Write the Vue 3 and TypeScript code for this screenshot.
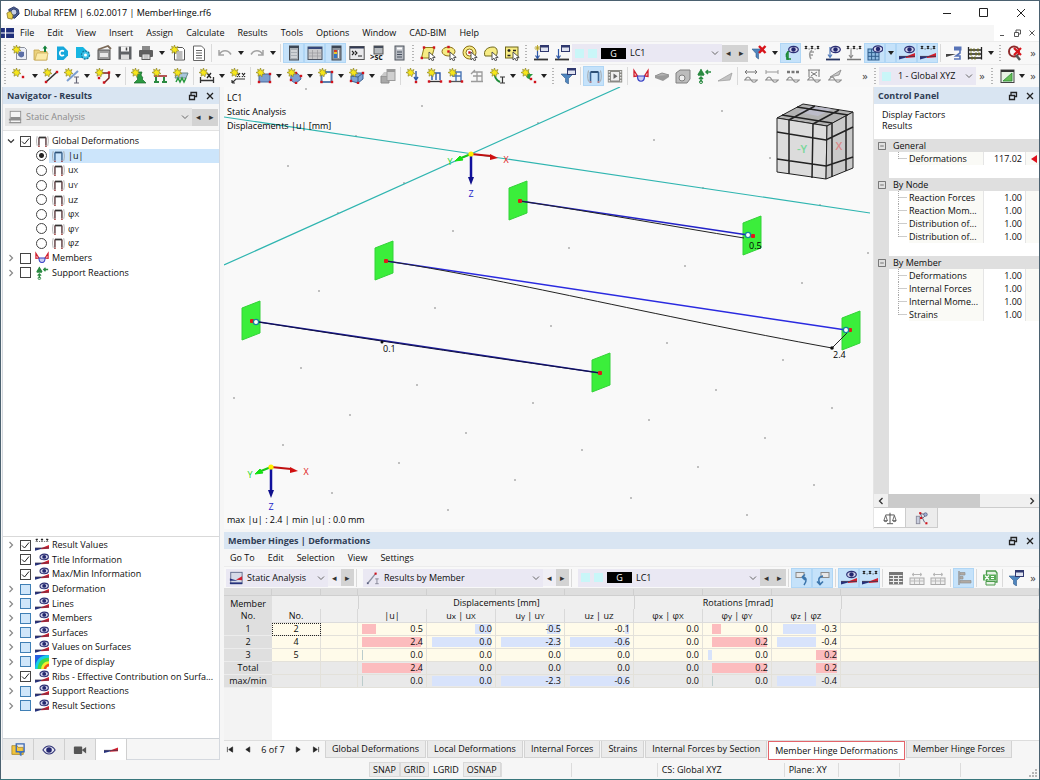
<script setup lang="ts">
import { h, ref } from 'vue'
import type { FunctionalComponent } from 'vue'

const star =
  '<path d="M4.5 0l.9 2.7L8 1.5 6.9 4.1l2 1.5-2.4.5-.6 2.7-1.6-2-2.3 1.4.5-2.6L0 4.5l2.4-.9L1.6 1.3l2.1 1z" fill="#f6e61a" stroke="#8f8726" stroke-width=".7"/>'
const wedge =
  '<path d="M0 14.5v-3.2h8v1z" fill="#26327c"/><path d="M7 11.6L16 8v4.3l-9 .6z" fill="#d2202f"/><path d="M0 11.4h16" stroke="#3c3350" stroke-width=".8"/>'
const eye = (x: number, y: number) =>
  `<ellipse cx="${x}" cy="${y}" rx="4.800" ry="3.200" fill="#d3d4ea" stroke="#2c2f74" stroke-width="1.200"/><circle cx="${x}" cy="${y}" r="2.200" fill="#23276f"/>`
const xxx = '<path d="M1 1l2 3m0-3l-2 3M7 1l2 3m0-3l-2 3M13 1l2 3m0-3l-2 3" stroke="#222" stroke-width="1.200"/><path d="M4.600 4h1M10.600 4h1" stroke="#333"/>'
const cursor = '<path d="M9 7v8l2-1.800 1.200 2.600 1.600-.8-1.200-2.400 2.600-.2z" fill="#fff" stroke="#444" stroke-width=".9"/>'
const red = (pts: number[][]) =>
  pts.map(([x, y]) => `<rect x="${x - 1.2}" y="${y - 1.2}" width="2.400" height="2.400" fill="#d0121b"/>`).join('')
const win = '<rect x="7.500" y=".5" width="8" height="6" fill="#dfe3f0" stroke="#30396f"/><path d="M7 1.500h9" stroke="#30396f" stroke-width="2"/>'
const frame = (c: string, top: string) =>
  `<path d="M4.500 4h8" stroke="${top}" stroke-width="2"/><path d="M4.500 13V4M12.500 13V4" stroke="${c}" stroke-width="1.600"/><path d="M4.500 13.500v1M12.500 13.500v1" stroke="#8d1d1d" stroke-width="2"/><path d="M2.500 2.500c-1 4-1 7 0 11M14.500 2.500c1 4 1 7 0 11" fill="none" stroke="#999" stroke-width=".8"/>`
const wave = '<path d="M1 12h14M2 12c2-4 4-4 6 0 2 3 4 3 6 0" fill="none" stroke="#8d8d8d" stroke-width="1.200"/>'

const icons: Record<string, string> = {
  newModel: '<path d="M4.500 2.500h8l2 2v10h-10z" fill="#eceff6" stroke="#8a8f9b"/><path d="M6 10c0-4 3-4 6-3v4c-2 2-4 2-6-1z" fill="#5b6ea6"/>' + star,
  open: '<path d="M1 5h5l1 1.500h7V15H1z" fill="#ecd27c" stroke="#c2a14a" stroke-width=".8"/><path d="M2 15l2-7h11l-1.500 7z" fill="#fbeaa9" stroke="#c9ab55" stroke-width=".7"/><path d="M11 7V3.500H9.500L12 .5l2.500 3H13V7z" fill="#12813a"/>',
  dlubal: '<path d="M3 1.500h6.500L14 6v4.500L9.500 15H3z" fill="#17a8dc"/><path d="M10 6.300C7.500 4.800 5.800 6.200 5.800 8.200S7.800 11.500 10 10" fill="none" stroke="#fff" stroke-width="1.700"/>',
  cloud: '<path d="M1 2h7l3 3v8H1z" fill="#17b6e2"/><circle cx="10.500" cy="10" r="4" fill="#3fc4ea" stroke="#14789e" stroke-width="1.300" stroke-dasharray="2 1"/><circle cx="10.500" cy="10" r="1.500" fill="#fff"/>',
  manager: '<rect x="2" y="5" width="12" height="9.500" fill="#9c9c9c" stroke="#555"/><rect x="4" y="8" width="8" height="4" fill="#e7e7e7"/><path d="M2 4.500L12 1l3 3" fill="none" stroke="#7b6a58" stroke-width="1.800"/>',
  save: '<path d="M1.500 1.500h13v13h-13z" fill="#5e6164"/><rect x="4" y="1.500" width="8" height="5" fill="#f4f4f4"/><rect x="4" y="9.500" width="8" height="5" fill="#dcdcdc"/><path d="M9.500 2.500v3" stroke="#444" stroke-width="1.500"/>',
  print: '<rect x="4" y="1" width="8" height="5" fill="#8b8b8b"/><rect x="1" y="5" width="14" height="7" rx="1" fill="#606060"/><rect x="4" y="9" width="8" height="5.500" fill="#f1f1f1" stroke="#5a5a5a"/><path d="M5.500 11h5M5.500 13h5" stroke="#888" stroke-width=".8"/>',
  newReport: '<path d="M4.500 2.500h8l2 2v10.500h-10z" fill="#fff" stroke="#555"/><path d="M6.500 7h6M6.500 9h6M6.500 11h6M6.500 13h6" stroke="#666" stroke-width=".9"/>' + star,
  report: '<path d="M2.500 1h8l3 3v11.500h-11z" fill="#fff" stroke="#666"/><path d="M5 5.500h6M5 8h6M5 10.500h6M5 13h6" stroke="#666"/>',
  undo: '<path d="M2 5v5h5M2.500 9.500C5 4.500 11 4.500 14 9.500" fill="none" stroke="#a3a3a3" stroke-width="1.500"/>',
  redo: '<path d="M14 5v5H9M13.500 9.500C11 4.500 5 4.500 2 9.500" fill="none" stroke="#a3a3a3" stroke-width="1.500"/>',
  panelA: '<rect x="3.500" y="1" width="9" height="14" fill="#a9afb5" stroke="#474d55"/><path d="M3 2h10" stroke="#3c4654" stroke-width="2"/><path d="M5 6h6M5 9h6M5 12h6" stroke="#f5f5f5" stroke-width="1.200"/>',
  panelB: '<rect x="1" y="2" width="14" height="12.500" fill="#c9c9cb" stroke="#4d5563"/><path d="M1 3h14" stroke="#35477a" stroke-width="2"/><path d="M5.500 5v9M10.500 5v9M2 8h13M2 11h13" stroke="#9a9a9e" stroke-width=".7"/>',
  panelC: '<rect x="4" y="1" width="9" height="14" fill="#8d949c" stroke="#474d55"/><path d="M4 2h9" stroke="#3c4654" stroke-width="2"/><path d="M6 5h3v8H6z" fill="#3273c4"/><path d="M6 5h3v2H6z" fill="#d13b2a"/><path d="M6 7h3v2H6z" fill="#e6c62b"/><path d="M10.500 5v8" stroke="#eee"/>',
  console: '<rect x=".8" y="1.500" width="14.400" height="13" fill="#e9e9eb" stroke="#555"/><path d="M1 2.500h14" stroke="#333b55" stroke-width="2"/><path d="M3 6l2 2-2 2M6 6l2 2-2 2M9 11h4" fill="none" stroke="#222" stroke-width="1.100"/>',
  script: '<rect x="4" y="1" width="9" height="8" fill="#b5b9bd" stroke="#555"/><path d="M4 2h9" stroke="#444c5a" stroke-width="2"/><text x="0" y="15" font-size="8" font-weight="700" fill="#222">&gt;sc</text>',
  calc: '<rect x="4" y="1" width="9" height="14" fill="#b6bac1" stroke="#51565f"/><path d="M6 3.500h5" stroke="#fff" stroke-width="2"/><path d="M6 7h5M6 9.500h5M6 12h5" stroke="#47505f" stroke-width="1.200"/>',
  selPoly: '<path d="M4 2.500h10.500L11.500 13H1.500z" fill="#f7ec84" stroke="#8d7d18"/>' + red([[4, 2.5], [14, 2.5], [1.8, 13]]) + cursor,
  selEllipse: '<ellipse cx="7.500" cy="6.500" rx="6.500" ry="4.500" fill="#f7ec84" stroke="#8a6f18"/>' + red([[7.5, 2], [7.5, 6.5]]) + cursor,
  selCircle: '<circle cx="7.500" cy="7.500" r="6.500" fill="#f7ec84" stroke="#8a6f18"/><circle cx="7.500" cy="7.500" r="3.500" fill="#fff" stroke="#8a6f18"/>' + red([[7.5, 7.5]]) + cursor,
  selFree: '<path d="M2 11C0 6 4 2 10 2c5 0 5 6 3 9z" fill="#f7ec84" stroke="#6f681c"/>' + cursor,
  selCalc: '<rect x="1.500" y="2" width="12.500" height="11" fill="#f7ec84" stroke="#6d6418"/><path d="M3.500 5.500h3M5 4v3M9 5.500h3M3.500 10.500h3" stroke="#222" stroke-width="1.300"/>' + cursor,
  loadNew: '<path d="M1 14.500h14" stroke="#333" stroke-width="1.800"/><path d="M4.500 5v8M2.500 10.500l2 3 2-3" fill="none" stroke="#2e58a6" stroke-width="1.200"/>' + win + '<path d="M4.500 0v6M1.500 3h6M2.500 1l4 4M6.500 1l-4 4" stroke="#b39f1c" stroke-width=".9"/>',
  load: '<path d="M1 14.500h14" stroke="#333" stroke-width="1.800"/><path d="M4.500 4v9M2.500 10.500l2 3 2-3" fill="none" stroke="#2e58a6" stroke-width="1.200"/>' + win,
  filterX: '<path d="M1 4h10L7.500 8.500V14L5 12V8.500z" fill="#4f86bf" stroke="#325d8c" stroke-width=".6"/><path d="M8 1l6.500 7M14.500 1L8 8" stroke="#d8141b" stroke-width="2.400"/>',
  supEye: '<path d="M7 6c-4 1-5 5-2 8M5 6v9M3 14h5" fill="none" stroke="#1d8a37" stroke-width="1.500"/>' + eye(10.5, 4.5),
  supX: '<path d="M8 5c-3 2-3 6-1 9M6 7h4M6 10h3" fill="none" stroke="#9c9c9c" stroke-width="1.500"/>' + xxx,
  lineEye: '<path d="M1 14.500h14" stroke="#26345f" stroke-width="1.800"/><path d="M5 2v10M3 9.500l2 3 2-3" fill="none" stroke="#4f7aba" stroke-width="1.200"/>' + eye(10.5, 4.5),
  lineX: '<path d="M1 14.500h14" stroke="#777" stroke-width="1.500"/><path d="M5 5v8M3 10l2 3 2-3" fill="none" stroke="#8b8b8b" stroke-width="1.200"/>' + xxx,
  meshEye: '<rect x="1" y="4" width="11" height="11" fill="#8fbbe2" stroke="#2f5d8b"/><path d="M4.600 4v11M8.300 4v11M1 7.600h11M1 11.300h11" stroke="#2f5d8b"/>' + eye(11, 4),
  resEye: wedge + eye(10.5, 4.5),
  resX: wedge + xxx,
  resWin: '<path d="M0 9h10l-10 3z" fill="#444"/><path d="M8 4h6v4l-4 3h4v3H8" fill="none" stroke="#5773b7" stroke-width="1.600"/><rect x="8" y="1.500" width="7.500" height="4" fill="#5773b7"/>',
  abacus: '<path d="M1.500 2v12.500M14.500 2v12.500M1 5h14M1 9h14M1 13h14" stroke="#222" stroke-width="1.300"/><path d="M4 3.500v3M7 3.500v3M11 3.500v3M4 7.500v3M9 7.500v3M12 7.500v3M5 11.500v3M8 11.500v3" stroke="#6a6a22" stroke-width="1.500"/>',
  zoomX: '<circle cx="7" cy="6.500" r="5" fill="none" stroke="#8e2b2b" stroke-width="2"/><path d="M9 10l4 5" stroke="#555" stroke-width="2.500"/><path d="M7 3l7 7M14 3l-7 7" stroke="#d8141b" stroke-width="2.200"/>',
  node: star + red([[11, 9]]),
  line: '<path d="M3 14L14 4" stroke="#333" stroke-width="1.600"/>' + red([[3, 14], [14, 4]]) + star,
  member: '<path d="M3 13L14 3" stroke="#7c9fd0" stroke-width="2"/><path d="M10 9h5M12.500 9v6M10 15h5" stroke="#667" stroke-width="1.200"/>' + star,
  polyline: '<path d="M5 5h9v5L9 15" fill="none" stroke="#7b2020" stroke-width="1.500"/>' + red([[14, 4.5], [9, 14.5], [4, 10]]) + star,
  supNode: '<path d="M7 4h4l-1 3 2 3-1 1 4 4H3l4-4-1-1z" fill="#2a9a41" stroke="#17682a" stroke-width=".7"/>' + star,
  supLine: '<path d="M2 8h13" stroke="#a02020" stroke-width="1.500"/><path d="M4 9v5M2 14h5M12 9v5M10 14h5" stroke="#2a8a41" stroke-width="2"/>' + star,
  supSurf: '<path d="M4 5h11l-2 5H2z" fill="#a9c6dc" stroke="#688"/><path d="M3 14l2-4 2 4 2-4 2 4 2-4" fill="none" stroke="#2a9a41" stroke-width="1.500"/>' + star,
  dimX: '<path d="M1.500 9v6M14.500 9v6M1.500 12.500h13" stroke="#333" stroke-width="1.300"/><path d="M8 5l4 5M12 5l-4 5" stroke="#222" stroke-width="1.300"/>' + star,
  dimXX: '<path d="M2 15l4-4h9M2 15v-3M2 15h3" fill="none" stroke="#333" stroke-width="1.200"/><path d="M7 5l3 4M10 5L7 9M12 5l3 4M15 5l-3 4" stroke="#222" stroke-width="1.200"/>' + star,
  surface: '<rect x="3" y="6" width="11" height="8" fill="#7d9fd0" stroke="#48689c"/>' + red([[3, 14], [14, 14], [14, 6]]) + star,
  surfRound: '<path d="M4 8c4-6 9-2 10 3l-5 4c-4-1-6-3-5-7z" fill="#7d9fd0" stroke="#48689c"/>' + red([[4, 12], [9, 15], [14, 8], [9, 5]]) + star,
  opening: '<rect x="3.500" y="4" width="10" height="10" fill="#fff" stroke="#5b7fae" stroke-width="2"/>' + red([[3.5, 14], [14, 14], [14, 4], [3.5, 4]]) + star,
  solid: '<path d="M2 8l5-3h7v6l-5 4-7-2z" fill="#7ea4d4" stroke="#3d6192"/><path d="M2 8l7 1 5-4M9 9v6" fill="none" stroke="#3d6192"/>' + red([[2, 13], [9, 15], [14, 5]]) + star,
  block: '<path d="M1 8h8v7H1z" fill="#a9a9a9" stroke="#8a8a8a"/><path d="M1 8l3-4h4v4z" fill="#c9c9c9"/><rect x="7" y="1.500" width="8" height="11" fill="#cfcfcf" stroke="#9b9b9b"/><path d="M7 3h8" stroke="#999" stroke-width="2"/>',
  nLoad: '<path d="M10 3v9M8 9l2 3 2-3" fill="none" stroke="#2e58a6" stroke-width="1.400"/>' + red([[10, 14]]) + star,
  mLoad: '<path d="M2 13.500h12" stroke="#333" stroke-width="1.300"/><path d="M4 5h9v7M9 5v7M5 7v5" fill="none" stroke="#2e58a6" stroke-width="1.400"/>' + red([[2, 13.5], [14, 13.5]]) + star,
  sLoad: '<path d="M2 13.500h12" stroke="#555" stroke-width="1.300"/><path d="M4 4h9v9M8 4v9M4 8h9" fill="none" stroke="#4c77b6" stroke-width="1.400"/>' + red([[2, 13.5], [14, 13.5]]) + star,
  gLoad: '<path d="M2 13.500h12M4 4h9v9M8 4v9M4 8h9M2 6l4-4" fill="none" stroke="#9b9b9b" stroke-width="1.300"/>',
  imp: '<path d="M5 4c-1 5 1 8 5 10" fill="none" stroke="#1d8a37" stroke-width="2"/><path d="M10 9h5M12.500 9v6M10 15h5" stroke="#333" stroke-width="1.200"/>' + star,
  hinge: '<path d="M4 6l4-3v3h4l-3 3 1 3-4-2z" fill="#2a9a41"/>' + red([[10, 11], [14, 14]]) + star,
  filter: '<path d="M1 6h12L8.500 10.500V16l-3-2v-3.500z" fill="#4f86bf" stroke="#325d8c" stroke-width=".6"/>' + win,
  frameBtn: frame('#5a3a3e', '#333'),
  frameBlue: frame('#3b6694', '#2e5074'),
  film: '<rect x=".8" y="2" width="14.400" height="12.500" fill="#8b8b86"/><rect x="4" y="4" width="8" height="8.500" fill="#efefef"/><path d="M6.500 5.500v5.500l4-2.700z" fill="#666"/><path d="M2.300 3v11M13.700 3v11" stroke="#eee" stroke-width="1.200" stroke-dasharray="1.500 1.500"/>',
  moment: '<path d="M1 2.500v6L4.500 8zM15 2.500v6L11.500 8z" fill="#f6c8cb" stroke="#d2202f" stroke-width="1.300"/><path d="M4.500 8h7c0 7-7 7-7 0z" fill="#c9cdf2" stroke="#3741c4" stroke-width="1.200"/>',
  slab: '<path d="M1 8l7-3 7 2-6 4z" fill="#b5b5b5" stroke="#8f8f8f"/><path d="M1 8v2l8 3 6-4V7" fill="#9a9a9a"/>',
  gSolid: '<path d="M1 5l4-3h10v9l-3 4H1z" fill="#bcbcbc" stroke="#808080"/><circle cx="7" cy="10" r="3" fill="#eee" stroke="#808080"/>',
  react: '<path d="M5 7V1M2 7h6M2.500 6l2.500-4 2.500 4z" fill="#2a8a41" stroke="#2a8a41" stroke-width="1.400"/><path d="M5 9v5M3 11l2-2 2 2M10 4h5M12 2l-2 2 2 2" fill="none" stroke="#2a8a41" stroke-width="1.500"/><circle cx="5" cy="14" r="1.500" fill="none" stroke="#2a8a41"/>',
  gWedge: '<path d="M1 13L15 5l-2 7z" fill="#c4c4c4" stroke="#9a9a9a" stroke-width=".7"/>',
  gr1: wave + '<path d="M2 4h12M4 2L2 4l2 2M12 2l2 2-2 2" fill="none" stroke="#777"/>',
  gr2: wave + '<path d="M2 4h12M2 2v4M14 2v4" fill="none" stroke="#999"/>',
  gr3: wave + '<path d="M2 4h12" stroke="#777" stroke-width="2.500" stroke-dasharray="3 1.500"/>',
  gr4: wave + '<path d="M2 2h12M3 2v7M13 2v7M5 4l6 4M11 4L5 8" fill="none" stroke="#777"/>',
  gr5: wave + '<path d="M3 9L14 2l-2 5z" fill="#c9c9c9" stroke="#888" stroke-width=".8"/>',
  cplane: '<rect x="2" y="2" width="13" height="12.500" fill="#e7f2e5" stroke="#444"/><path d="M2 3h13" stroke="#333" stroke-width="2"/><path d="M4 13l9-8v8z" fill="#67bf55" stroke="#2a8a35" stroke-width=".8"/>',
  jumpA: '<rect x="2" y="2.500" width="8" height="5" fill="#e7e7e7" stroke="#8a8a8a"/><path d="M8 7c5 0 5 4 2 8M8 7l3-2.500M8 7l3 3" fill="none" stroke="#3c76ad" stroke-width="1.600"/>',
  jumpB: '<rect x="6" y="2.500" width="8" height="5" fill="#e7e7e7" stroke="#8a8a8a"/><path d="M8 6c-5 1-5 4-3 8M2 11.500L5 14.500l3-3" fill="none" stroke="#3c76ad" stroke-width="1.600"/>',
  gridT: '<rect x="1" y="2" width="14" height="12.500" fill="#777"/><path d="M1.500 5.500h13M1.500 8.500h13M1.500 11.500h13M5.500 5v9M10.500 5v9" stroke="#ededed" stroke-width="1.100"/>',
  gridG: '<rect x="1" y="8" width="14" height="6.500" fill="#eee" stroke="#a9a9a9"/><path d="M5.500 8v6M10.500 8v6M1 11h14" stroke="#bbb"/><path d="M3 4.500h9M5 3L3 4.500 5 6M11 3l2 1.500L11 6" fill="none" stroke="#b5b5b5"/>',
  bars: '<path d="M3 1v14" stroke="#999" stroke-width="1.500"/><path d="M4 2.500h5v2.500H4zM4 6.500h3v2.500H4zM4 10.500h11v2.500H4z" fill="#b0a9a2" stroke="#929292" stroke-width=".7"/>',
  excel: '<path d="M4.500 1h9l1.500 2v9h-10.500z" fill="#e7f3e6" stroke="#4c9a4c" stroke-width="1.300"/><path d="M4 11.500h9v3.500H4z" fill="#e7f3e6" stroke="#4c9a4c"/><rect x="1" y="4.500" width="13" height="6" fill="#58ab58"/><path d="M3 5.500l4 4M7 5.500l-4 4M9 6.500h3M9 8.500h3" stroke="#fff" stroke-width="1.200"/>',
  analysis: '<rect x="2" y="1.500" width="13" height="13" fill="#d6dbe8" stroke="#5a6687"/><path d="M1 8.500l9 2.500H1z" fill="#26327c"/><path d="M8 10l7-4v4.500z" fill="#d2202f"/><path d="M1 14h14" stroke="#26327c" stroke-width="2"/>',
  analysisG: '<rect x="2.500" y="1.500" width="12" height="13" fill="#f4f4f4" stroke="#8e8e8e"/><path d="M1 11h14M3 9h11" stroke="#8e8e8e" stroke-width="1.800"/><path d="M1 14.500h14" stroke="#8e8e8e"/>',
  byMember: '<path d="M2 14L11 3" stroke="#8a8fa0" stroke-width="1.500"/><rect x="1" y="13" width="2" height="2" fill="#5a5f80"/>' + red([[11, 3]]) + '<path d="M10.500 9h4M12.500 9v5.500M10.500 14.500h4" stroke="#889" stroke-width="1.100"/>',
  rainbow: '<path d="M0 0h16v16H0z" fill="#2560e0"/><path d="M0 16C0 6 6 0 16 0v16z" fill="#15cfe6"/><path d="M3 16C3 8 8 3 16 3v13z" fill="#42d845"/><path d="M7 16c0-5 4-9 9-9v9z" fill="#f3ee2d"/><path d="M10 16c0-3 3-6 6-6v6z" fill="#f1501c"/><path d="M13 16c0-2 1-3 3-3v3z" fill="#fff"/>',
  data: '<path d="M1 3h6l1 2h6v8H1z" fill="#f5c63a" stroke="#9c7a1c" stroke-width=".8"/><path d="M6 1h9v9H6z" fill="none" stroke="#3a68b4" stroke-width="1.500"/><path d="M8 9h6l-2 3v3l-2-1v-2z" fill="#3f74bd"/>',
  eyeTab: '<path d="M1 8c4-6 10-6 14 0-4 6-10 6-14 0z" fill="#e8e8f4" stroke="#2c2f74" stroke-width="1.200"/><circle cx="8" cy="8" r="3.200" fill="#23276f"/>',
  camera: '<rect x="1" y="4" width="9.500" height="8.500" rx="1" fill="#555"/><path d="M10 8l5-3.500v7.500z" fill="#555"/>',
  wedgeTab: '<g transform="translate(0 -3)">' + wedge + '</g>',
  scales: '<path d="M8 2v12M4.500 14.500h7M3 4.500h10" stroke="#444" fill="none"/><path d="M3 5l-2 6h4zM13 5l-2 6h4z" fill="none" stroke="#444" stroke-width=".9"/><path d="M1 11c1 1.500 3 1.500 4 0M11 11c1 1.500 3 1.500 4 0" stroke="#444" fill="none"/>',
  factors: '<rect x="1.500" y="6" width="4" height="8.500" fill="#c9cede" stroke="#889"/><path d="M6 3l7 1M6 3l5 10M13 4L9 8" stroke="#446" stroke-width=".9"/>' + red([[6, 2.5], [13, 14], [7, 8]]) + '<circle cx="12" cy="4" r="2" fill="#9fb2d8" stroke="#446" stroke-width=".7"/>',
}

/* Strip entries: an icon name, a trailing "*" for a pressed button,
   "v" drop arrow, "V" pressed drop arrow, "|" divider, ":" grip, "»" overflow. */
const ToolStrip: FunctionalComponent<{ items: string }> = (props) =>
  h('div', { class: 'strip' }, props.items.split(' ').map((it) => {
    if (it === '|') return h('i', { class: 'sep' })
    if (it === ':') return h('i', { class: 'grip' })
    if (it === 'v' || it === 'V')
      return h('button', { class: ['drop', { on: it === 'V' }], 'aria-label': 'More options' }, h('i'))
    if (it === '»') return h('button', { class: 'over', 'aria-label': 'More tools' }, '»')
    const name = it.replace('*', '')
    return h('button', { class: ['tool', { on: it.endsWith('*') }], 'aria-label': name },
      h('svg', { viewBox: '0 0 16 16', innerHTML: icons[name] }))
  }))
ToolStrip.props = ['items']

const row1a = ': newModel open dlubal cloud manager save print v newReport report | undo v redo v | panelA* panelB* panelC* console script calc : selPoly selEllipse selCircle selFree selCalc : loadNew load'
const row1b = 'filterX v supEye* supX lineEye lineX meshEye* V resEye* resX* | resWin abacus v : zoomX'
const row2a = ': node v line member v polyline v | supNode supLine supSurf | dimX v dimXX | surface v surfRound v opening v solid v block | nLoad mLoad sLoad gLoad imp v hinge v : filter | frameBlue* film | moment slab gSolid react gWedge | gr1 gr2 gr3 gr4 gr5'
const menus = ['File', 'Edit', 'View', 'Insert', 'Assign', 'Calculate', 'Results', 'Tools', 'Options', 'Window', 'CAD-BIM', 'Help']
const tableMenus = ['Go To', 'Edit', 'Selection', 'View', 'Settings']

const component = ref('|u|')
const components = [
  { id: '|u|', a: '|u|', b: '' },
  { id: 'ux', a: 'u', b: 'X' },
  { id: 'uy', a: 'u', b: 'Y' },
  { id: 'uz', a: 'u', b: 'Z' },
  { id: 'px', a: 'φ', b: 'X' },
  { id: 'py', a: 'φ', b: 'Y' },
  { id: 'pz', a: 'φ', b: 'Z' },
]
const options = [
  { t: 'Result Values', icon: 'resX', on: true, exp: true },
  { t: 'Title Information', icon: 'resEye', on: true, exp: false },
  { t: 'Max/Min Information', icon: 'resEye', on: true, exp: false },
  { t: 'Deformation', icon: 'resEye', on: false, exp: true },
  { t: 'Lines', icon: 'resEye', on: false, exp: true },
  { t: 'Members', icon: 'resEye', on: false, exp: true },
  { t: 'Surfaces', icon: 'resEye', on: false, exp: true },
  { t: 'Values on Surfaces', icon: 'resEye', on: false, exp: true },
  { t: 'Type of display', icon: 'rainbow', on: false, exp: true },
  { t: 'Ribs - Effective Contribution on Surfa...', icon: 'resEye', on: true, exp: true },
  { t: 'Support Reactions', icon: 'resEye', on: false, exp: true },
  { t: 'Result Sections', icon: 'resEye', on: false, exp: true },
]
const navTabs = ['data', 'eyeTab', 'camera', 'wedgeTab']

const factors = [
  { t: 'General', rows: [['Deformations', '117.02']] },
  { t: 'By Node', rows: [['Reaction Forces', '1.00'], ['Reaction Mom...', '1.00'], ['Distribution of...', '1.00'], ['Distribution of...', '1.00']] },
  { t: 'By Member', rows: [['Deformations', '1.00'], ['Internal Forces', '1.00'], ['Internal Mome...', '1.00'], ['Strains', '1.00']] },
]

/* Cell: text, bar kind, bar start and bar width in percent of the cell. */
type Cell = [string, string?, number?, number?]
const z: Cell = ['0.0']
const results: { no: string; obj: string; sum: boolean; cells: Cell[] }[] = [
  { no: '1', obj: '2', sum: false, cells: [['0.5', 'r', 6, 20], ['0.0', 'b', 71, 23], ['-0.5', 'b', 75, 19], ['-0.1', 'b', 88, 6], z, ['0.0', 'r', 13, 13], ['-0.3', 'b', 16, 48]] },
  { no: '2', obj: '4', sum: false, cells: [['2.4', 'r', 6, 86], ['0.0', 'b', 7, 87], ['-2.3', 'b', 7, 87], ['-0.6', 'b', 7, 87], z, ['0.2', 'r', 13, 81], ['-0.4', 'b', 7, 57]] },
  { no: '3', obj: '5', sum: false, cells: [['0.0', 'n', 6, 1], z, z, z, z, ['0.0', 'b', 7, 6], ['0.2', 'r', 64, 31]] },
  { no: 'Total', obj: '', sum: true, cells: [['2.4', 'r', 6, 86], z, z, z, z, ['0.2', 'r', 13, 81], ['0.2', 'r', 64, 31]] },
  { no: 'max/min', obj: '', sum: true, cells: [['0.0', 'n', 6, 1], ['0.0', 'b', 7, 87], ['-2.3', 'b', 7, 87], ['-0.6', 'b', 7, 87], z, ['0.0', 'n', 13, 1], ['-0.4', 'b', 7, 57]] },
]
const heads = [['u', 'x', 'X'], ['u', 'y', 'Y'], ['u', 'z', 'Z'], ['φ', 'x', 'X'], ['φ', 'y', 'Y'], ['φ', 'z', 'Z']]
const sheets = ['Global Deformations', 'Local Deformations', 'Internal Forces', 'Strains', 'Internal Forces by Section', 'Member Hinge Deformations', 'Member Hinge Forces']

const supports = [[509, 181], [375, 241], [242, 301], [743, 216], [842, 311], [592, 353]]
const nodes = [[520, 201], [386, 261], [252, 321], [753, 236], [850, 330], [600, 373]]
const hinges = [[256, 322], [748, 235], [846, 330]]
const dots = [
  [306, 89], [422, 106], [722, 111], [356, 136], [538, 123], [654, 140], [770, 158], [288, 166], [404, 183], [338, 213],
  [453, 231], [569, 248], [685, 266], [802, 283], [868, 253], [703, 188], [820, 205], [319, 291], [435, 308], [551, 326],
  [667, 343], [783, 360], [301, 368], [417, 385], [533, 403], [649, 420], [765, 438], [283, 445], [399, 463], [515, 480],
  [631, 498], [747, 515], [234, 398], [350, 415], [466, 433], [582, 450], [698, 467], [814, 485], [716, 390], [832, 408],
  [332, 493], [448, 510],
]
const triads = [{ x: 471, y: 154, lx: 506, ly: 163, yx: 450, yy: 165 }, { x: 271, y: 467, lx: 306, ly: 475, yx: 250, yy: 478 }]
</script>

<template>
  <div class="app">
    <header class="titlebar">
      <svg class="logo" viewBox="0 0 16 16">
        <path d="M3 4l6-3 5 3 1 5-5 5-4-1z" fill="#4a5f94" stroke="#26345f" />
        <circle cx="9" cy="7" r="3.500" fill="#c6d0e6" stroke="#26345f" />
        <path d="M1 8l4-2 3 5-1 4-5-1z" fill="#e9d24a" stroke="#7b6a1c" stroke-width=".8" />
      </svg>
      <h1>Dlubal RFEM | 6.02.0017 | MemberHinge.rf6</h1>
      <button aria-label="Minimize"><svg viewBox="0 0 12 12"><path d="M2 6.500h8" /></svg></button>
      <button aria-label="Maximize"><svg viewBox="0 0 12 12"><path d="M1.500 1.500h8v8h-8z" /></svg></button>
      <button aria-label="Close"><svg viewBox="0 0 12 12"><path d="M2 2l8 8M10 2l-8 8" /></svg></button>
    </header>

    <nav class="menubar">
      <svg class="flag" viewBox="0 0 13 10"><path d="M0 0h13v10H0z" fill="#1f2f7a" /><path d="M0 5h13M4.500 0v10" stroke="#fff" stroke-width="1.200" /></svg>
      <button v-for="m in menus" :key="m">{{ m }}</button>
      <span class="mdi">
        <button aria-label="Minimize document"><svg viewBox="0 0 10 10"><path d="M3 7.500h4" /></svg></button>
        <button aria-label="Restore document"><svg viewBox="0 0 10 10"><path d="M2.500 4.500h4v4h-4zM4 4V2h4.500v4H7" /></svg></button>
        <button aria-label="Close document"><svg viewBox="0 0 10 10"><path d="M2.500 2.500l5 5M7.500 2.500l-5 5" /></svg></button>
      </span>
    </nav>

    <div class="bar">
      <ToolStrip :items="row1a" />
      <div class="combo wide">
        <i class="sw" /><i class="sw" /><b class="g">G</b>
        <select aria-label="Load case"><option>LC1</option></select>
      </div>
      <button class="step" aria-label="Previous load case">◂</button>
      <button class="step" aria-label="Next load case">▸</button>
      <ToolStrip :items="row1b" />
      <ToolStrip class="push" items="»" />
    </div>
    <div class="bar tight">
      <ToolStrip :items="row2a" />
      <ToolStrip class="push" items="» :" />
      <div class="combo csys">
        <i class="sw" />
        <select aria-label="Coordinate system"><option>1 - Global XYZ</option></select>
      </div>
      <ToolStrip items="» : cplane v »" />
    </div>

    <div class="body">
      <aside class="navigator">
        <div class="head">
          <h2>Navigator - Results</h2>
          <button aria-label="Float panel"><svg viewBox="0 0 10 10"><path d="M1.500 4.500h5v4h-5zM3 4V1.500h5.500v4H7" /></svg></button>
          <button aria-label="Close panel"><svg viewBox="0 0 10 10"><path d="M2 2l6 6M8 2l-6 6" /></svg></button>
        </div>
        <div class="line">
          <div class="combo off">
            <svg class="ic" viewBox="0 0 16 16" v-html="icons.analysisG" />
            <select aria-label="Analysis type" disabled><option>Static Analysis</option></select>
          </div>
          <button class="step" aria-label="Previous">◂</button>
          <button class="step" aria-label="Next">▸</button>
        </div>
        <div class="tree top">
          <label class="node">
            <svg class="tw open" viewBox="0 0 8 8"><path d="M1 2.500l3 3 3-3" /></svg>
            <input type="checkbox" checked><svg class="ic" viewBox="0 0 16 16" v-html="icons.frameBtn" />Global Deformations
          </label>
          <label v-for="c in components" :key="c.id" class="node sub">
            <input v-model="component" type="radio" name="component" :value="c.id">
            <span class="pick" :class="{ sel: component === c.id }">
              <svg class="ic" viewBox="0 0 16 16" v-html="component === c.id ? icons.frameBlue : icons.frameBtn" />
              <span>{{ c.a }}<small>{{ c.b }}</small></span>
            </span>
          </label>
          <label class="node">
            <svg class="tw" viewBox="0 0 8 8"><path d="M2.500 1l3 3-3 3" /></svg>
            <input type="checkbox"><svg class="ic" viewBox="0 0 16 16" v-html="icons.moment" />Members
          </label>
          <label class="node">
            <svg class="tw" viewBox="0 0 8 8"><path d="M2.500 1l3 3-3 3" /></svg>
            <input type="checkbox"><svg class="ic" viewBox="0 0 16 16" v-html="icons.react" />Support Reactions
          </label>
        </div>
        <div class="tree low">
          <label v-for="o in options" :key="o.t" class="node">
            <svg class="tw" viewBox="0 0 8 8"><path v-if="o.exp" d="M2.500 1l3 3-3 3" /></svg>
            <input type="checkbox" :checked="o.on" :class="{ tint: !o.on }"><svg class="ic" viewBox="0 0 16 16" v-html="icons[o.icon]" />{{ o.t }}
          </label>
        </div>
        <div class="navtabs">
          <button v-for="(t, i) in navTabs" :key="t" :class="{ cur: i === 3 }" :aria-label="t">
            <svg class="ic" viewBox="0 0 16 16" v-html="icons[t]" />
          </button>
        </div>
      </aside>

      <main class="work">
        <div class="upper">
          <svg class="scene" viewBox="224 87 649 442">
            <circle v-for="(d, i) in dots" :key="i" :cx="d[0]" :cy="d[1]" r=".8" fill="#777" />
            <path d="M224 265L620 87M224 117L870 213" stroke="#2fb5b0" stroke-width="1.200" />
            <g fill="#3bee3b" stroke="#35d23a" stroke-width="1" stroke-linejoin="round">
              <path v-for="(s, i) in supports" :key="i" :d="`M${s[0]} ${s[1] + 7}l18 -7v32l-18 7z`" />
            </g>
            <g fill="none">
              <path d="M520 201L748 235" stroke="#2222c8" stroke-width="1.500" />
              <path d="M520 201C600 213 670 226 744 238" stroke="#222" />
              <path d="M386 261L846 330" stroke="#2a2ae0" stroke-width="1.500" />
              <path d="M386 261C500 278 650 315 832 348L847 333" stroke="#222" />
              <path d="M252 321L600 373" stroke="#1c1c9c" stroke-width="1.500" />
              <path d="M252 321C360 338 480 356 600 373" stroke="#111140" />
            </g>
            <g fill="#e21a1a">
              <rect v-for="(n, i) in nodes" :key="i" :x="n[0] - 2" :y="n[1] - 2" width="4" height="4" rx="1" />
            </g>
            <circle v-for="(n, i) in hinges" :key="i" :cx="n[0]" :cy="n[1]" r="2.600" fill="#fff" stroke="#14879c" stroke-width="1.300" />
            <circle cx="382" cy="342" r="1.500" fill="#111" /><circle cx="832" cy="348" r="1.800" fill="#111" />
            <g v-for="(t, i) in triads" :key="i">
              <path :d="`M${t.x} ${t.y}l20 2`" stroke="#c01010" stroke-width="2" />
              <path :d="`M${t.x + 27} ${t.y + 4}l-8 -4v6z`" fill="#d01010" />
              <path :d="`M${t.x} ${t.y}l-10 4`" stroke="#18c818" stroke-width="2" />
              <path :d="`M${t.x - 16} ${t.y + 7}l5 -5 3 4z`" fill="#12e012" stroke="#12e012" />
              <path :d="`M${t.x} ${t.y}v24`" stroke="#10109c" stroke-width="2.500" />
              <path :d="`M${t.x} ${t.y + 31}l-3 -8h6z`" fill="#10108c" />
              <circle :cx="t.x" :cy="t.y" r="2.600" fill="#ffef00" />
              <text :x="t.lx" :y="t.ly" fill="#e01818" text-anchor="middle">X</text>
              <text :x="t.yx" :y="t.yy" fill="#22d822" text-anchor="middle">Y</text>
              <text :x="t.x" :y="t.y + 43" fill="#2424c8" text-anchor="middle">Z</text>
            </g>
            <g stroke="#222" stroke-linejoin="round">
              <path d="M777 118l26-14 50 8-26 14z" fill="#b2b2b2" />
              <path d="M777 118l50 8-1 53-49-7z" fill="#dcdcdc" />
              <path d="M827 126l26-14v56l-27 11z" fill="#c9c9c9" />
              <path d="M798 112l14-6 20 3-14 7z" fill="#bcbcca" stroke="none" />
              <path d="M782 115l50 8M797 107l51 8M789 120l26-14M813 124l26-14M777 132l49 8 27-13M777 159l49 7 27-9M789 120v54M813 124l-1 54M832 123v54M846 116v55" fill="none" stroke-width="1.500" />
              <text x="802" y="153" fill="#79d79a" stroke="none" text-anchor="middle" class="face">-Y</text>
              <text x="839" y="150" fill="#dc8a8a" stroke="none" text-anchor="middle" class="face">X</text>
            </g>
            <text x="227" y="101">LC1</text>
            <text x="227" y="115">Static Analysis</text>
            <text x="227" y="129">Displacements |u| [mm]</text>
            <text x="749" y="249" class="val">0.5</text>
            <text x="833" y="358" class="val">2.4</text>
            <text x="383" y="352" class="val">0.1</text>
            <text x="227" y="523">max |u| : 2.4 | min |u| : 0.0 mm</text>
          </svg>

          <aside class="control">
            <div class="head">
              <h2>Control Panel</h2>
              <button aria-label="Float panel"><svg viewBox="0 0 10 10"><path d="M1.500 4.500h5v4h-5zM3 4V1.500h5.500v4H7" /></svg></button>
              <button aria-label="Close panel"><svg viewBox="0 0 10 10"><path d="M2 2l6 6M8 2l-6 6" /></svg></button>
            </div>
            <p class="about">Display Factors<br>Results</p>
            <div class="factors">
              <section v-for="f in factors" :key="f.t">
                <h3><svg viewBox="0 0 9 9"><path d="M.5.5h8v8h-8zM2.500 4.500h4" /></svg>{{ f.t }}</h3>
                <div v-for="(r, i) in f.rows" :key="i" class="factor" :class="{ last: i === f.rows.length - 1 }">
                  <i class="branch" /><span class="name">{{ r[0] }}</span><span class="num">{{ r[1] }}</span>
                  <span class="mark"><svg v-if="r[1] === '117.02'" viewBox="0 0 6 8"><path d="M6 0v8L0 4z" fill="#e0101c" /></svg></span>
                </div>
              </section>
            </div>
            <div class="scroll">
              <button aria-label="Scroll left"><svg viewBox="0 0 8 8"><path d="M5.500 1l-3 3 3 3" /></svg></button>
              <div class="track"><i /></div>
              <button aria-label="Scroll right"><svg viewBox="0 0 8 8"><path d="M2.500 1l3 3-3 3" /></svg></button>
            </div>
            <div class="cptabs">
              <button class="cur" aria-label="Factors"><svg class="ic" viewBox="0 0 16 16" v-html="icons.scales" /></button>
              <button aria-label="Filter"><svg class="ic" viewBox="0 0 16 16" v-html="icons.factors" /></button>
            </div>
          </aside>
        </div>

        <section class="tables">
          <div class="head">
            <h2>Member Hinges | Deformations</h2>
            <button aria-label="Float panel"><svg viewBox="0 0 10 10"><path d="M1.500 4.500h5v4h-5zM3 4V1.500h5.500v4H7" /></svg></button>
            <button aria-label="Close panel"><svg viewBox="0 0 10 10"><path d="M2 2l6 6M8 2l-6 6" /></svg></button>
          </div>
          <nav class="submenu"><button v-for="m in tableMenus" :key="m">{{ m }}</button></nav>
          <div class="bar mini">
            <div class="combo c1">
              <svg class="ic" viewBox="0 0 16 16" v-html="icons.analysis" />
              <select aria-label="Analysis"><option>Static Analysis</option></select>
            </div>
            <button class="step lite" aria-label="Previous analysis">◂</button>
            <button class="step" aria-label="Next analysis">▸</button>
            <ToolStrip items="|" />
            <div class="combo c2">
              <svg class="ic" viewBox="0 0 16 16" v-html="icons.byMember" />
              <select aria-label="Result table"><option>Results by Member</option></select>
            </div>
            <button class="step lite" aria-label="Previous table">◂</button>
            <button class="step" aria-label="Next table">▸</button>
            <ToolStrip items="|" />
            <div class="combo c3">
              <i class="sw" /><i class="sw" /><b class="g">G</b>
              <select aria-label="Table load case"><option>LC1</option></select>
            </div>
            <button class="step" aria-label="Previous load case">◂</button>
            <button class="step" aria-label="Next load case">▸</button>
            <ToolStrip items="| jumpA* jumpB* | resEye* resX* | gridT gridG gridG | bars* | excel | filter" />
            <ToolStrip class="push" items="»" />
          </div>
          <div class="sheet">
            <table>
              <colgroup>
                <col class="k0"><col class="k1"><col class="k2"><col v-for="n in 7" :key="n" class="k3"><col>
              </colgroup>
              <thead>
                <tr class="letters"><td v-for="n in 11" :key="n" /></tr>
                <tr class="h1">
                  <th rowspan="2" class="mem">Member<br>No.</th><th colspan="2" />
                  <th colspan="4" class="edge">Displacements [mm]</th>
                  <th colspan="3" class="edge">Rotations [mrad]</th><th class="edge" />
                </tr>
                <tr class="h2">
                  <th>No.</th><th /><th>|u|</th>
                  <th v-for="(q, i) in heads" :key="i">{{ q[0] }}<small>{{ q[1] }}</small> | {{ q[0] }}<small>{{ q[2] }}</small></th>
                  <th />
                </tr>
              </thead>
              <tbody>
                <tr v-for="(r, i) in results" :key="r.no" :class="{ sum: r.sum }">
                  <th>{{ r.no }}</th>
                  <td class="obj" :class="{ focus: i === 0 }">{{ r.obj }}</td><td />
                  <td v-for="(c, j) in r.cells" :key="j" class="v">
                    <i v-if="c[1]" class="fill" :class="c[1]" :style="{ left: c[2] + '%', width: c[3] + '%' }" /><span>{{ c[0] }}</span>
                  </td>
                  <td />
                </tr>
              </tbody>
            </table>
          </div>
          <div class="sheettabs">
            <div class="pager">
              <button aria-label="First table"><svg viewBox="0 0 8 8"><path d="M1 1v6M7 1v6L2.500 4z" /></svg></button>
              <button aria-label="Previous table"><svg viewBox="0 0 8 8"><path d="M6 1v6L1.500 4z" /></svg></button>
              <span>6 of 7</span>
              <button aria-label="Following table"><svg viewBox="0 0 8 8"><path d="M2 1v6L6.500 4z" /></svg></button>
              <button aria-label="Last table"><svg viewBox="0 0 8 8"><path d="M7 1v6M1 1v6L5.500 4z" /></svg></button>
            </div>
            <button v-for="(s, i) in sheets" :key="s" class="tab" :class="{ cur: i === 5 }">{{ s }}</button>
          </div>
        </section>
      </main>
    </div>

    <footer class="status">
      <button class="on">SNAP</button><button class="on">GRID</button><button>LGRID</button><button class="on">OSNAP</button>
      <span class="s1" /><span class="s2" /><span class="s3">CS: Global XYZ</span><span class="s4">Plane: XY</span><span class="s5" /><span class="s5" /><span class="s5" />
      <svg viewBox="0 0 8 8"><path d="M6 0h2v2H6zM3 3h2v2H3zM6 3h2v2H6zM0 6h2v2H0zM3 6h2v2H3zM6 6h2v2H6z" fill="#b5b5b5" /></svg>
    </footer>
  </div>
</template>

<style>
html, body { margin: 0; background: #f6f6f6; }
</style>

<style scoped>
.app {
  box-sizing: border-box; min-height: 100vh; display: flex; flex-direction: column;
  border: 1px solid #4b6170; border-bottom-color: #39767c; background: #f6f6f6;
  font: 9px/12px "Open Sans", "Noto Sans", sans-serif; color: #0c0c0c; overflow: hidden;
}
.app :deep(button) { border: 0; margin: 0; padding: 0; background: none; font: inherit; color: inherit; flex: none; display: flex; align-items: center; justify-content: center; }
h1, h2, h3, p { margin: 0; font: inherit; }
.ic { width: 14px; height: 14px; flex: none; }

.titlebar { height: 24px; display: flex; align-items: center; background: #fff; }
.titlebar .logo { width: 14px; height: 14px; margin: 0 4px 0 5px; }
.titlebar h1 { flex: 1; font-size: 9px; color: #000; }
.titlebar button { width: 37px; height: 24px; }
.titlebar button svg { width: 12px; height: 12px; fill: none; stroke: #222; }

.menubar { height: 16px; display: flex; align-items: center; }
.menubar .flag { width: 13px; height: 10px; }
.app .menubar > button { padding: 0 7px 0 6px; height: 16px; }
.mdi { margin-left: auto; display: flex; background: #fff; }
.mdi button { width: 15px; height: 16px; }
.mdi svg { width: 10px; height: 10px; fill: none; stroke: #555; }

.bar { height: 23px; display: flex; align-items: center; border-top: 1px solid #ececec; box-sizing: border-box; background: #f8f8f8; }
.bar :deep(.strip) { display: flex; align-items: center; height: 20px; flex: none; }
.bar .push { margin-left: auto; }
.bar :deep(.tool) { width: 21px; height: 20px; }
.bar :deep(.tool svg) { width: 16px; height: 16px; }
.bar :deep(.on) { background: #c5e2fa; box-shadow: inset 0 0 0 1px #b0d6f5; }
.bar :deep(.drop) { width: 11px; height: 20px; }
.bar.tight :deep(.drop) { width: 10px; }
.bar :deep(.drop i) { border: 3px solid transparent; border-top: 4px solid #222; border-bottom: 0; }
.bar :deep(.sep) { width: 1px; height: 18px; margin: 0 2px; background: #dadada; }
.bar :deep(.grip) { width: 2px; height: 16px; margin: 0 3px; background: repeating-linear-gradient(#b5b5b5 0 1px, transparent 1px 3px); }
.bar :deep(.over) { width: 12px; height: 20px; font-size: 11px; color: #444; }
.combo { display: flex; align-items: center; height: 18px; background: #eae8f3; min-width: 0; padding-left: 3px; box-sizing: border-box; gap: 4px; }
.combo select {
  flex: 1; min-width: 0; height: 18px; border: 0; padding: 0 14px 0 0; font: inherit; color: inherit; appearance: none;
  background: url("data:image/svg+xml,%3Csvg xmlns='http://www.w3.org/2000/svg' viewBox='0 0 8 8'%3E%3Cpath d='M1 2.500l3 3 3-3' fill='none' stroke='%23666'/%3E%3C/svg%3E") right 3px center / 8px 8px no-repeat;
}
.combo.wide { width: 150px; }
.combo.csys { width: 97px; gap: 7px; }
.combo .sw { width: 9px; height: 9px; background: #c9f6f8; flex: none; }
.combo .g { width: 25px; height: 11px; background: #000; color: #fff; font-weight: 400; text-align: center; line-height: 11px; flex: none; }
.combo.off { flex: 1; background: #e4e4e4; color: #8b8b8b; }
.combo.off select { color: #8b8b8b; opacity: 1; }
.app .step { width: 13px; height: 17px; background: #d3d3d3; color: #333; }
.app .step.lite { background: #f0eff5; }
.combo.c1 { width: 102px; }
.combo.c2 { width: 180px; margin-left: 4px; }
.combo.c3 { width: 182px; margin-left: 4px; }
.bar.mini { padding-left: 2px; height: 22px; }

.body { flex: 1; display: flex; min-height: 0; gap: 4px; }
.head { height: 17px; display: flex; align-items: center; background: #d9e5f2; padding: 0 1px 0 4px; flex: none; }
.head h2 { flex: 1; font-weight: 700; color: #2f3d55; font-size: 9px; }
.head button { width: 17px; height: 17px; }
.head svg { width: 10px; height: 10px; fill: none; stroke: #222; stroke-width: 1.3; }

.navigator { width: 218px; flex: none; display: flex; flex-direction: column; border: 1px solid #d5d9df; border-width: 0 1px; box-sizing: border-box; margin-left: 1px; background: #fff; }
.line { display: flex; padding: 4px 1px 4px 2px; background: #f6f6f6; border-bottom: 1px solid #e2e2e2; align-items: center; }
.tree { display: grid; grid-auto-rows: 1fr; flex: none; }
.tree.top { height: 146px; margin-top: 3px; }
.tree.low { height: 175px; margin-top: auto; padding-top: 1px; border-top: 1px solid #d9d9d9; margin-bottom: 25px; }
.node { display: flex; align-items: center; white-space: nowrap; padding-left: 4px; min-height: 0; }
.node .tw { width: 8px; height: 8px; fill: none; stroke: #888; stroke-width: 1.2; margin-right: 5px; }
.node .tw.open { stroke: #333; }
.node .ic { margin-right: 3px; }
.node input { appearance: none; width: 11px; height: 11px; border: 1px solid #444; margin: 0 4px 0 0; background: #fff; flex: none; box-sizing: border-box; }
.node input[type="checkbox"]:checked { background: url("data:image/svg+xml,%3Csvg xmlns='http://www.w3.org/2000/svg' viewBox='0 0 9 9'%3E%3Cpath d='M1 4.500l2.500 2.500L8 1.500' fill='none' stroke='%23222'/%3E%3C/svg%3E") center / 9px 9px no-repeat; }
.node input.tint { background: #cfe6fa; border-color: #3f7fb5; }
.node input[type="radio"] { border-radius: 50%; margin-right: 2px; }
.node input[type="radio"]:checked { background: radial-gradient(circle, #222 0 2px, #fff 3px); }
.node.sub { padding-left: 33px; }
.pick { flex: 1; display: flex; align-items: center; align-self: stretch; padding-left: 2px; }
.pick.sel { background: #cce5fb; }
.node small, table small { font-size: 8px; }
.navtabs { display: flex; border-top: 1px solid #cfd3d8; background: #f6f6f6; height: 22px; flex: none; border-bottom: 1px solid #d5d9df; box-sizing: border-box; }
.app .navtabs button { width: 31px; height: 21px; background: #ebebeb; border-right: 1px solid #cfcfcf; }
.app .navtabs button.cur { background: #fff; }

.work { flex: 1; min-width: 0; display: flex; flex-direction: column; }
.upper { flex: 1; min-height: 0; display: flex; }
.scene { flex: 1; min-width: 0; height: 442px; display: block; background: #f9f9f9; border-right: 1px solid #e5e5e5; }
.scene text { font-size: 9px; }
.scene .face { font-size: 11px; font-weight: 600; }
.control { width: 165px; flex: none; display: flex; flex-direction: column; background: #fff; }
.about { padding: 5px 8px 8px; line-height: 11px; }
.factors { flex: 1; background: linear-gradient(to right, #dfdfdf 15px, #fff 15px); }
.factors section { padding-bottom: 13px; }
.factors h3 { height: 13px; display: flex; align-items: center; background: #dfdfdf; gap: 7px; padding-left: 4px; }
.factors h3 svg { width: 8px; height: 8px; fill: none; stroke: #666; }
.factor { height: 13px; display: grid; grid-template-columns: 11px 75px 1fr 13px; margin-left: 24px; align-items: stretch; line-height: 13px; }
.branch { border-left: 1px dotted #aaa; background: linear-gradient(#ccc, #ccc) 0 6px / 8px 1px no-repeat; }
.last .branch { height: 7px; }
.name { background: #fafaf6; white-space: nowrap; border-right: 1px solid #e5e5e5; }
.num { text-align: right; padding-right: 3px; border-right: 1px solid #e5e5e5; }
.mark { background: #fafaf6; display: flex; align-items: center; justify-content: flex-end; padding-right: 2px; }
.mark svg { width: 6px; height: 8px; }
.scroll { display: flex; height: 13px; background: #f0f0f0; flex: none; }
.scroll button { width: 14px; height: 13px; }
.scroll svg { width: 8px; height: 8px; fill: none; stroke: #333; stroke-width: 1.3; }
.track { flex: 1; display: flex; }
.track i { width: 67%; background: #cbcbcb; }
.cptabs { display: flex; height: 21px; background: #f6f6f6; flex: none; border-top: 1px solid #ccc; }
.app .cptabs button { width: 32px; height: 20px; border-right: 1px solid #ccc; border-bottom: 1px solid #ccc; background: #ececec; box-sizing: border-box; }
.app .cptabs button.cur { background: #fff; }

.tables { margin-top: 3px; flex: none; display: flex; flex-direction: column; }
.submenu { display: flex; height: 17px; }
.app .submenu button { padding: 0 7px 0 6px; height: 17px; }
.sheet { height: 153px; background: linear-gradient(to right, #f3f3f3 48px, #fff 48px); border: 1px solid #ddd; border-width: 1px 0; box-sizing: border-box; }
table { border-collapse: separate; border-spacing: 0; table-layout: fixed; width: 100%; }
.k0 { width: 48px; } .k1 { width: 49px; } .k2 { width: 37px; } .k3 { width: 69px; }
th, td { padding: 0; font-weight: 400; text-align: center; box-sizing: border-box; height: 13px; line-height: 12px; border-right: 1px solid #e3e1da; border-bottom: 1px solid #e3e1da; }
.letters td { height: 7px; line-height: 6px; background: #dedede; border-color: #cfcfcf; }
thead th { background: #efefef; border-right: 0; border-bottom: 0; }
.h2 th { height: 14px; border-bottom: 1px solid #dcdcdc; border-right: 1px solid #d9d9d9; }
.h1 .edge { border-left: 1px solid #d3d3d3; }
thead .mem, tbody th { background: #dfdfdf; border-right: 0; border-bottom-color: #ececec; }
tbody td { background: #fffbea; }
tbody .sum td { background: #e9e9e9; }
.obj.focus { outline: 1px dotted #222; outline-offset: -1px; }
tbody .v { position: relative; text-align: right; padding-right: 3px; }
.v span { position: relative; }
.fill { position: absolute; top: 1px; bottom: 1px; }
.fill.r { background: #fcbcbe; } .fill.b { background: #d8e3fb; } .fill.n { background: #bcc; }
.sheettabs { display: flex; height: 19px; align-items: flex-start; gap: 1px; }
.pager { width: 100px; display: flex; align-items: center; height: 17px; justify-content: space-between; padding: 0 4px 0 2px; box-sizing: border-box; }
.pager svg { width: 8px; height: 7px; stroke: #222; fill: #222; stroke-width: .8; }
.app .sheettabs .tab { height: 17px; padding: 0 6px; background: #ebebeb; border: 1px solid #d3d3d3; border-top: 0; }
.app .sheettabs .tab.cur { background: #fff; border: 1px solid #e4646a; height: 19px; }

.status { height: 19px; display: flex; align-items: center; padding-left: 368px; flex: none; }
.app .status button { height: 15px; padding: 0 3px; border: 1px solid transparent; }
.app .status button.on { background: #ebebeb; border-color: #d9d9d9; }
.status span { height: 14px; line-height: 14px; border-left: 1px solid #dcdcdc; padding-left: 4px; box-sizing: border-box; }
.status .s1 { width: 70px; } .status .s2 { width: 86px; } .status .s3 { width: 127px; } .status .s4 { width: 54px; } .status .s5 { width: 61px; }
.status svg { width: 8px; height: 8px; margin: 6px 2px 0 auto; }
</style>
